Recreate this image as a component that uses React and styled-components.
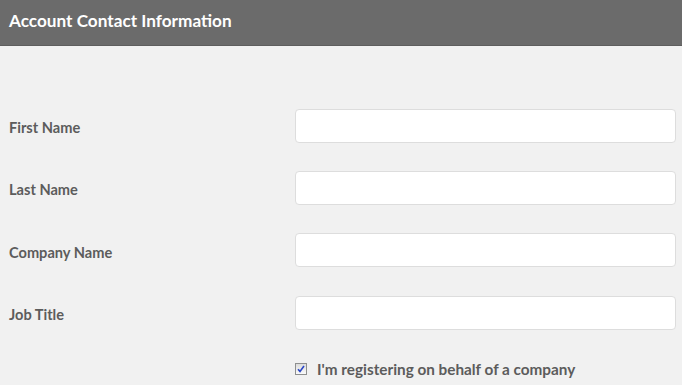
import React from "react";
import styled, { createGlobalStyle } from "styled-components";

const Global = createGlobalStyle`
  html, body { margin: 0; padding: 0; background: #f1f1f1; }
  body { font-family: Lato, "Open Sans", sans-serif; }
`;

const Page = styled.div`
  width: 682px;
  min-height: 385px;
  background: #f1f1f1;
`;

const Header = styled.div`
  height: 46px;
  background: #6b6b6b;
  border-bottom: 1px solid #5e5e5e;
  display: flex;
  align-items: center;
  padding-left: 9px;
  padding-bottom: 5px;
  box-sizing: border-box;
`;

const Title = styled.h2`
  margin: 0;
  color: #ffffff;
  font-size: 17.2px;
  font-weight: 700;
`;

const Form = styled.div`
  display: flex;
  flex-direction: column;
  gap: 28.4px;
  padding: 62.5px 6px 0 9px;
`;

const Row = styled.div`
  display: grid;
  grid-template-columns: 286px 381px;
  align-items: center;
`;

const Label = styled.label`
  color: #5c5c5c;
  font-size: 14.6px;
  font-weight: 700;
  padding-top: 4px;
`;

const Input = styled.input`
  box-sizing: border-box;
  height: 34px;
  width: 100%;
  background: #ffffff;
  border: 1px solid #dddddd;
  border-radius: 4px;
  outline: none;
  font-family: inherit;
`;

const CheckRow = styled.div`
  display: flex;
  align-items: center;
  gap: 10px;
  margin-left: 286px;
  margin-top: 2px;
`;

const Box = styled.span`
  box-sizing: border-box;
  width: 12px;
  height: 12px;
  border: 1px solid #8e8f8f;
  background: linear-gradient(#dcdcdc, #fafafa);
  display: flex;
  align-items: center;
  justify-content: center;
`;

const CheckText = styled.span`
  color: #5c5c5c;
  font-size: 15.3px;
  font-weight: 700;
`;

const fields = ["First Name", "Last Name", "Company Name", "Job Title"];

export default function App() {
  return (
    <Page>
      <Global />
      <Header>
        <Title>Account Contact Information</Title>
      </Header>
      <Form>
        {fields.map((f) => (
          <Row key={f}>
            <Label>{f}</Label>
            <Input type="text" />
          </Row>
        ))}
        <CheckRow>
          <Box>
            <svg width="8" height="8" viewBox="0 0 8 8">
              <path d="M1 4.2 L3 6.4 L7 1" fill="none" stroke="#2a47c7" strokeWidth="1.6" />
            </svg>
          </Box>
          <CheckText>I'm registering on behalf of a company</CheckText>
        </CheckRow>
      </Form>
    </Page>
  );
}
